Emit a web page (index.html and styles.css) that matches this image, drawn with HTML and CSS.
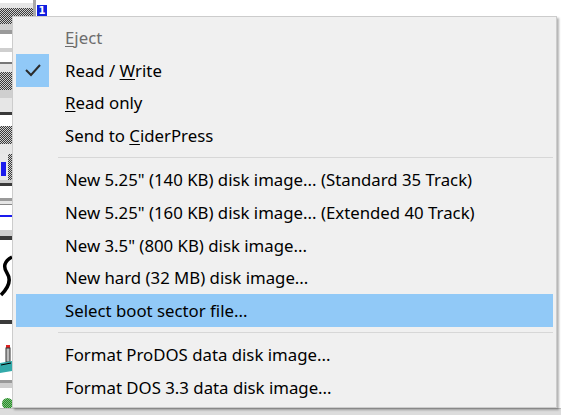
FILE: index.html
```html
<!DOCTYPE html>
<html>
<head>
<meta charset="utf-8">
<link rel="stylesheet" href="styles.css">
</head>
<body>
<div class="desk">
  <div class="toolbar">
    <div class="tb-top">
      <div class="tb-btn">
        <div class="s-white h3"></div>
        <div class="s-light h5"></div>
        <div class="dither h8"></div>
      </div>
      <div class="tb-edge"></div>
      <div class="badge">1</div>
    </div>
    <div class="dither h8"></div>
    <div class="s-mid h6"></div>
    <div class="s-gray h4"></div>
    <div class="s-white h14"></div>
    <div class="s-mid h4"></div>
    <div class="s-white h10"></div>
    <div class="s-dark2 h2"></div>
    <div class="s-light h8"></div>
    <div class="dither h18"></div>
    <div class="s-mid h8"></div>
    <div class="s-light h14"></div>
    <div class="s-dark h3"></div>
    <div class="s-white h11"></div>
    <div class="dither h18"></div>
    <div class="s-light h10"></div>
    <div class="row-blue h26"><div class="blue"></div><div class="dither grow"></div></div>
    <div class="s-mid h3"></div>
    <div class="s-dark h3"></div>
    <div class="s-white h12"></div>
    <div class="s-gray h3"></div>
    <div class="s-light h3"></div>
    <div class="box h26"><div class="bline"></div></div>
    <div class="s-mid h6"></div>
    <div class="s-dark h4"></div>
    <div class="s-white h15"></div>
    <div class="s-white h45">
      <svg width="12" height="45" viewBox="0 0 12 45"><path d="M12 2 C4 6 3 12 7 18 C11 24 9 32 1 40" fill="none" stroke="#000" stroke-width="3.5"/></svg>
    </div>
    <div class="s-white h20"></div>
    <div class="s-dark h4"></div>
    <div class="s-white h21"></div>
    <div class="s-white h30">
      <svg width="12" height="30" viewBox="0 0 12 30"><rect x="6" y="0" width="4" height="3" fill="#d22"/><rect x="6" y="3" width="4" height="14" fill="#bbb" stroke="#333" stroke-width="1"/><path d="M0 18 L12 16 L12 26 L0 28 Z" fill="#3aa"/><path d="M1 20 L11 18" stroke="#000" stroke-width="1"/></svg>
    </div>
    <div class="s-white h5"></div>
    <div class="s-gray h3"></div>
    <div class="s-mid h5"></div>
    <div class="s-white h10"></div>
    <div class="s-white h12"><div class="led"></div></div>
  </div>
  <div class="statusbar"></div>

  <div class="menu">
    <div class="item disabled"><span class="chk"></span><span class="label"><u>E</u>ject</span></div>
    <div class="item"><span class="chk on"><svg width="33" height="33" viewBox="0 0 33 33"><path d="M10 16 L15 21 L24 11" fill="none" stroke="#2b2b2b" stroke-width="2"/></svg></span><span class="label">Read / <u>W</u>rite</span></div>
    <div class="item"><span class="chk"></span><span class="label"><u>R</u>ead only</span></div>
    <div class="item"><span class="chk"></span><span class="label">Send to <u>C</u>iderPress</span></div>
    <div class="sep"></div>
    <div class="item"><span class="chk"></span><span class="label">New 5.25" (140 KB) disk image... (Standard 35 Track)</span></div>
    <div class="item"><span class="chk"></span><span class="label">New 5.25" (160 KB) disk image... (Extended 40 Track)</span></div>
    <div class="item"><span class="chk"></span><span class="label">New 3.5" (800 KB) disk image...</span></div>
    <div class="item"><span class="chk"></span><span class="label">New hard (32 MB) disk image...</span></div>
    <div class="item hot"><span class="chk"></span><span class="label">Select boot sector file...</span></div>
    <div class="sep"></div>
    <div class="item"><span class="chk"></span><span class="label">Format ProDOS data disk image...</span></div>
    <div class="item"><span class="chk"></span><span class="label">Format DOS 3.3 data disk image...</span></div>
  </div>
</div>
</body>
</html>
```

FILE: styles.css
```css
html, body {
  margin: 0;
  padding: 0;
  background: #ffffff;
}
.desk {
  position: relative;
  width: 561px;
  height: 415px;
  overflow: hidden;
  background: #ffffff;
}
.toolbar {
  display: flex;
  flex-direction: column;
  width: 48px;
}
.toolbar > div { flex: none; }
.tb-top {
  display: flex;
  height: 16px;
}
.tb-btn {
  display: flex;
  flex-direction: column;
  width: 33px;
}
.tb-edge {
  width: 3px;
  background: #a8a8a8;
}
.badge {
  width: 10px;
  height: 11px;
  margin-top: 5px;
  margin-left: 1px;
  background: #1020e0;
  color: #fff;
  font: bold 10px/11px "DejaVu Sans", sans-serif;
  text-align: center;
}
.h2 { height: 2px; } .h3 { height: 3px; } .h4 { height: 4px; } .h5 { height: 5px; }
.h6 { height: 6px; } .h8 { height: 8px; } .h10 { height: 10px; } .h11 { height: 11px; }
.h12 { height: 12px; } .h14 { height: 14px; } .h15 { height: 15px; } .h18 { height: 18px; }
.h20 { height: 20px; } .h21 { height: 21px; } .h26 { height: 26px; } .h30 { height: 30px; }
.h45 { height: 45px; }
.s-white { background: #ffffff; }
.s-light { background: #e6e6e6; }
.s-mid { background: #cfcfcf; }
.s-gray { background: #9a9a9a; }
.s-dark { background: #3a3a3a; }
.s-dark2 { background: #777; }
.dither {
  background: repeating-conic-gradient(#3a3a3a 0 25%, #d0d0d0 0 50%) 0 0 / 2px 2px;
}
.row-blue {
  display: flex;
  background: #e8e8e8;
}
.blue {
  width: 5px;
  height: 14px;
  margin: 8px 2px 0 1px;
  background: #1a1aee;
}
.grow { flex: 1; }
.box {
  background: #fff;
  border-top: 1px solid #888;
  box-sizing: border-box;
  padding-top: 10px;
}
.bline {
  height: 2px;
  background: #1a1aee;
}
.led {
  width: 11px;
  height: 11px;
  border-radius: 50%;
  margin-left: 2px;
  background: repeating-conic-gradient(#2a8a2a 0 25%, #7ac07a 0 50%) 0 0 / 2px 2px;
}
.statusbar {
  position: absolute;
  left: 0;
  right: 0;
  bottom: 0;
  height: 6px;
  background: #dcdcdc;
  border-top: 1px solid #bdbdbd;
}

/* context menu (overlay) */
.menu {
  position: absolute;
  left: 12px;
  top: 16px;
  width: 537px;
  padding: 4px 3px 3px 3px;
  background: #f0f0f0;
  border: 1px solid #cccccc;
  box-shadow: 2px 2px 2px rgba(0, 0, 0, 0.3);
  font-family: "Noto Sans", "Open Sans", sans-serif;
  font-size: 16.8px;
  color: #000;
}
.item {
  display: flex;
  align-items: center;
  height: 32.8px;
}
.item.hot { background: #91c9f7; }
.item.disabled { color: #6d6d6d; }
.chk {
  width: 33px;
  height: 33px;
  flex: none;
}
.chk.on { background: #91c9f7; }
.chk svg { display: block; }
.label {
  margin-left: 16px;
  white-space: nowrap;
}
.label u { text-underline-offset: 2px; }
.sep {
  height: 11px;
  display: flex;
  align-items: center;
  padding-left: 42px;
}
.sep::before {
  content: "";
  flex: 1;
  height: 1px;
  background: #d7d7d7;
}
```
